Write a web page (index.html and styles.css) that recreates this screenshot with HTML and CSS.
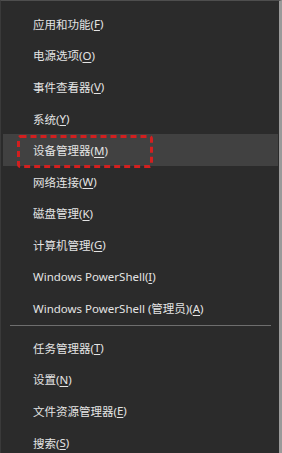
FILE: index.html
```html
<!DOCTYPE html>
<html lang="zh-CN">
<head>
    <meta charset="UTF-8">
    <meta name="viewport" content="width=device-width, initial-scale=1.0">
    <link rel="stylesheet" href="styles.css">
</head>
<body>

<div class="menu">
    <ul class="group">
        <li class="item">应用和功能(<u>F</u>)</li>
        <li class="item">电源选项(<u>O</u>)</li>
        <li class="item">事件查看器(<u>V</u>)</li>
        <li class="item">系统(<u>Y</u>)</li>
        <li class="item active">
            设备管理器(<u>M</u>)
            <svg class="mark" width="136" height="33" viewBox="0 0 136 33">
                <rect x="1.5" y="1.5" width="133" height="30" rx="2" fill="none"
                      stroke="#d21f1f" stroke-width="3" stroke-dasharray="6 4"/>
            </svg>
        </li>
        <li class="item">网络连接(<u>W</u>)</li>
        <li class="item">磁盘管理(<u>K</u>)</li>
        <li class="item">计算机管理(<u>G</u>)</li>
        <li class="item">Windows PowerShell(<u>I</u>)</li>
        <li class="item">Windows PowerShell (管理员)(<u>A</u>)</li>
    </ul>
    <div class="separator"></div>
    <ul class="group">
        <li class="item">任务管理器(<u>T</u>)</li>
        <li class="item">设置(<u>N</u>)</li>
        <li class="item">文件资源管理器(<u>E</u>)</li>
        <li class="item">搜索(<u>S</u>)</li>
    </ul>
</div>

</body>
</html>
```

FILE: styles.css
```css
body {
    margin: 0;
    background-color: #2b2b2b;
    font-family: "Noto Sans", "Noto Sans CJK SC", sans-serif;
}

.menu {
    height: 453px;
    box-sizing: border-box;
    padding-top: 7px;
    background-color: #2b2b2b;
    border-top: 1px solid #4e4e4e;
    border-left: 1px solid #3a3a3a;
    border-right: 3px solid #9a9a9a;
    overflow: hidden;
}

.group {
    list-style: none;
    margin: 0;
    padding: 0;
}

.item {
    position: relative;
    display: flex;
    align-items: center;
    height: 31.6px;
    padding-left: 32px;
    font-size: 11.5px;
    color: #e4e4e4;
    white-space: nowrap;
}

.item u {
    text-decoration-thickness: 1px;
    text-underline-offset: 2px;
}

.item.active {
    margin: 0 1px 0 2px;
    padding-left: 30px;
    background-color: #414141;
}

/* red annotation box drawn over the row */
.mark {
    position: absolute;
    left: 14px;
    top: 1px;
}

.separator {
    height: 1px;
    margin: 1px 8px 6px 9px;
    background-color: #6e6e6e;
}
```
